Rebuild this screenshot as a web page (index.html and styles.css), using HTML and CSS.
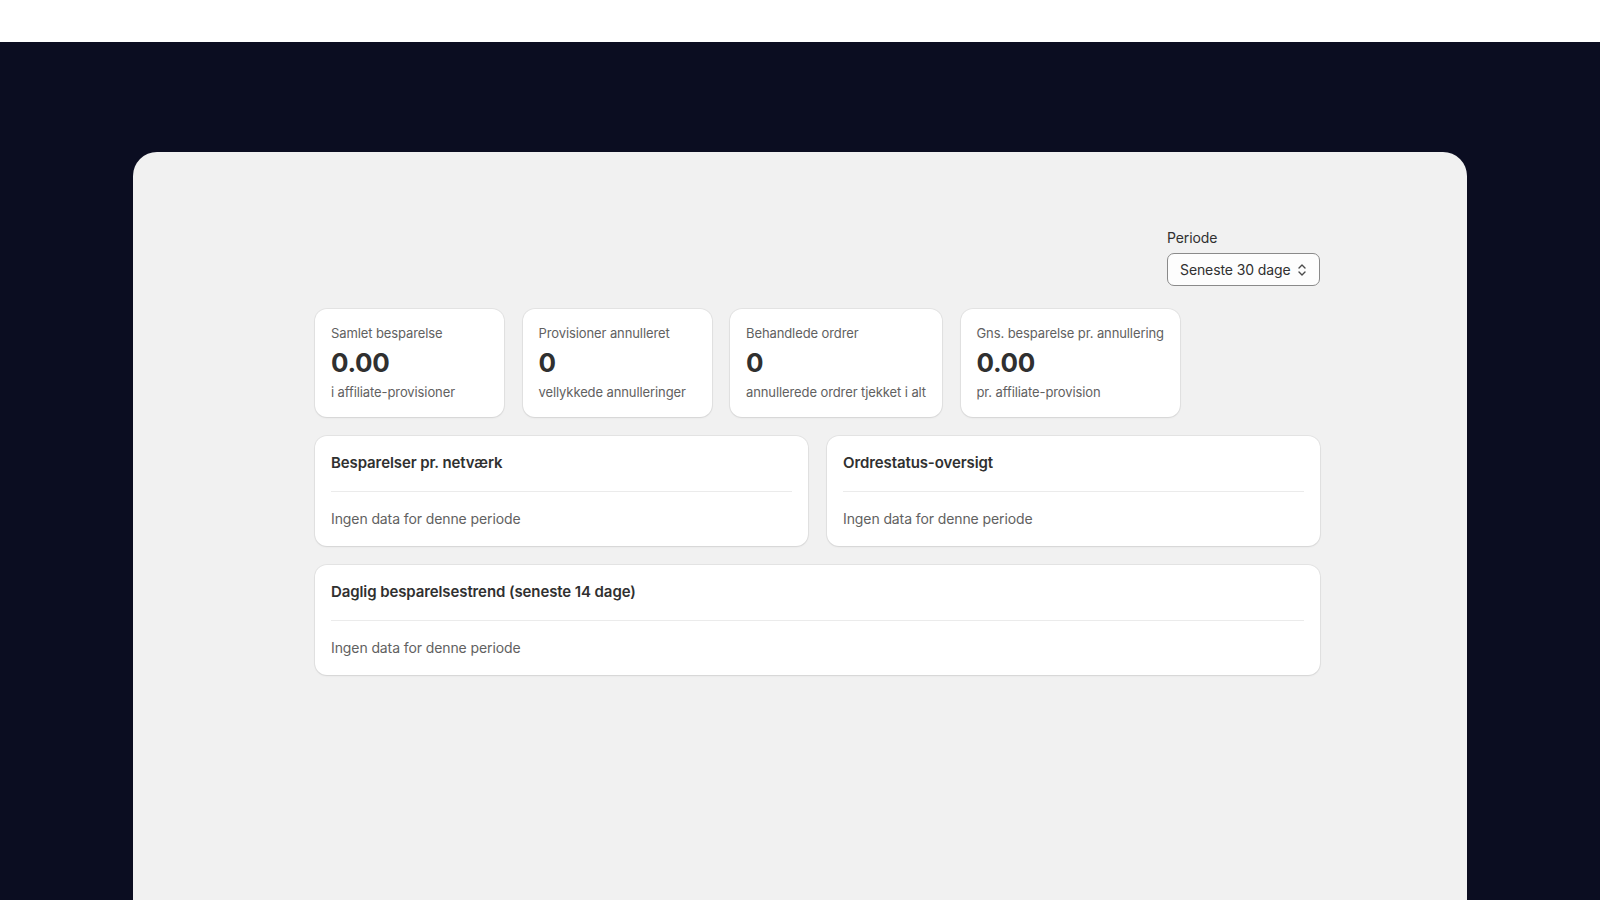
FILE: index.html
```html
<!DOCTYPE html>
<html lang="da">
<head>
<meta charset="utf-8">
<title>Besparelser</title>
<link rel="stylesheet" href="styles.css">
</head>
<body>
<div class="topbar"></div>
<div class="stage">
  <div class="panel">
    <div class="content">
      <div class="toolbar">
        <div class="field">
          <label class="field-label">Periode</label>
          <div class="select">
            <span>Seneste 30 dage</span>
            <svg class="select-icon" viewBox="0 0 10 16" width="10" height="16" aria-hidden="true">
              <path d="M2 6 L5 3 L8 6" fill="none" stroke="#4a4a4a" stroke-width="1.4" stroke-linecap="round" stroke-linejoin="round"/>
              <path d="M2 10 L5 13 L8 10" fill="none" stroke="#4a4a4a" stroke-width="1.4" stroke-linecap="round" stroke-linejoin="round"/>
            </svg>
          </div>
        </div>
      </div>

      <div class="stats">
        <div class="card stat">
          <div class="stat-label">Samlet besparelse</div>
          <div class="stat-value">0.00</div>
          <div class="stat-sub">i affiliate-provisioner</div>
        </div>
        <div class="card stat">
          <div class="stat-label">Provisioner annulleret</div>
          <div class="stat-value">0</div>
          <div class="stat-sub">vellykkede annulleringer</div>
        </div>
        <div class="card stat">
          <div class="stat-label">Behandlede ordrer</div>
          <div class="stat-value">0</div>
          <div class="stat-sub">annullerede ordrer tjekket i alt</div>
        </div>
        <div class="card stat">
          <div class="stat-label">Gns. besparelse pr. annullering</div>
          <div class="stat-value">0.00</div>
          <div class="stat-sub">pr. affiliate-provision</div>
        </div>
      </div>

      <div class="duo">
        <div class="card section">
          <h2 class="section-title">Besparelser pr. netværk</h2>
          <hr class="divider">
          <p class="empty">Ingen data for denne periode</p>
        </div>
        <div class="card section">
          <h2 class="section-title">Ordrestatus-oversigt</h2>
          <hr class="divider">
          <p class="empty">Ingen data for denne periode</p>
        </div>
      </div>

      <div class="card section">
        <h2 class="section-title">Daglig besparelsestrend (seneste 14 dage)</h2>
        <hr class="divider">
        <p class="empty">Ingen data for denne periode</p>
      </div>
    </div>
  </div>
</div>
</body>
</html>
```

FILE: styles.css
```css
* { box-sizing: border-box; }

html, body {
  margin: 0;
  padding: 0;
  height: 100%;
  overflow: hidden;
}

body {
  font-family: Inter, "Noto Sans", "Liberation Sans", sans-serif;
  color: #303030;
  background: #0b0d21;
}

.topbar {
  height: 42px;
  background: #ffffff;
}

.stage {
  background: #0b0d21;
  padding: 110px 133px 0;
  height: calc(100% - 42px);
}

.panel {
  background: #f1f1f1;
  border-radius: 24px 24px 0 0;
  height: 100%;
  padding: 76px 147px 0 182px;
}

.content {
  width: 1005px;
  display: flex;
  flex-direction: column;
  gap: 19px;
}

.toolbar {
  display: flex;
  justify-content: flex-end;
  margin-bottom: 4px;
}

.field {
  display: flex;
  flex-direction: column;
  gap: 5px;
}

.field-label {
  font-size: 14px;
  line-height: 20px;
  color: #303030;
  letter-spacing: -0.1px;
}

.select {
  width: 153px;
  height: 33px;
  border: 1px solid #8a8a8a;
  border-radius: 7px;
  background: #fdfdfd;
  display: flex;
  align-items: center;
  justify-content: space-between;
  padding: 0 12px 0 12px;
  font-size: 14px;
  letter-spacing: -0.1px;
  color: #303030;
}

.select-icon {
  display: block;
}

.card {
  background: #ffffff;
  border-radius: 12px;
  box-shadow: 0 0 0 1px rgba(0, 0, 0, 0.05), 0 1px 2px rgba(26, 26, 26, 0.08);
}

.stats {
  display: flex;
  gap: 18.5px;
}

.stat {
  min-width: 189px;
  padding: 16px;
  display: flex;
  flex-direction: column;
}

.stat-label {
  font-size: 13px;
  line-height: 18px;
  color: #616161;
  letter-spacing: -0.1px;
  white-space: nowrap;
  margin-top: -1px;
}

.stat-value {
  font-size: 26px;
  line-height: 32px;
  font-weight: 700;
  color: #303030;
  letter-spacing: -0.3px;
  margin-top: 5px;
}

.stat-sub {
  font-size: 13px;
  line-height: 18px;
  color: #616161;
  letter-spacing: -0.1px;
  margin-top: 4px;
  white-space: nowrap;
}

.duo {
  display: grid;
  grid-template-columns: 1fr 1fr;
  gap: 19px;
}

.section {
  padding: 16px 16px 17px;
}

.section-title {
  margin: 0;
  font-size: 15px;
  line-height: 22px;
  font-weight: 600;
  letter-spacing: -0.1px;
  color: #303030;
}

.divider {
  margin: 17px 0;
  border: 0;
  border-top: 1px solid #ebebeb;
}

.empty {
  margin: 0;
  font-size: 14px;
  line-height: 20px;
  letter-spacing: -0.1px;
  color: #616161;
}
```
